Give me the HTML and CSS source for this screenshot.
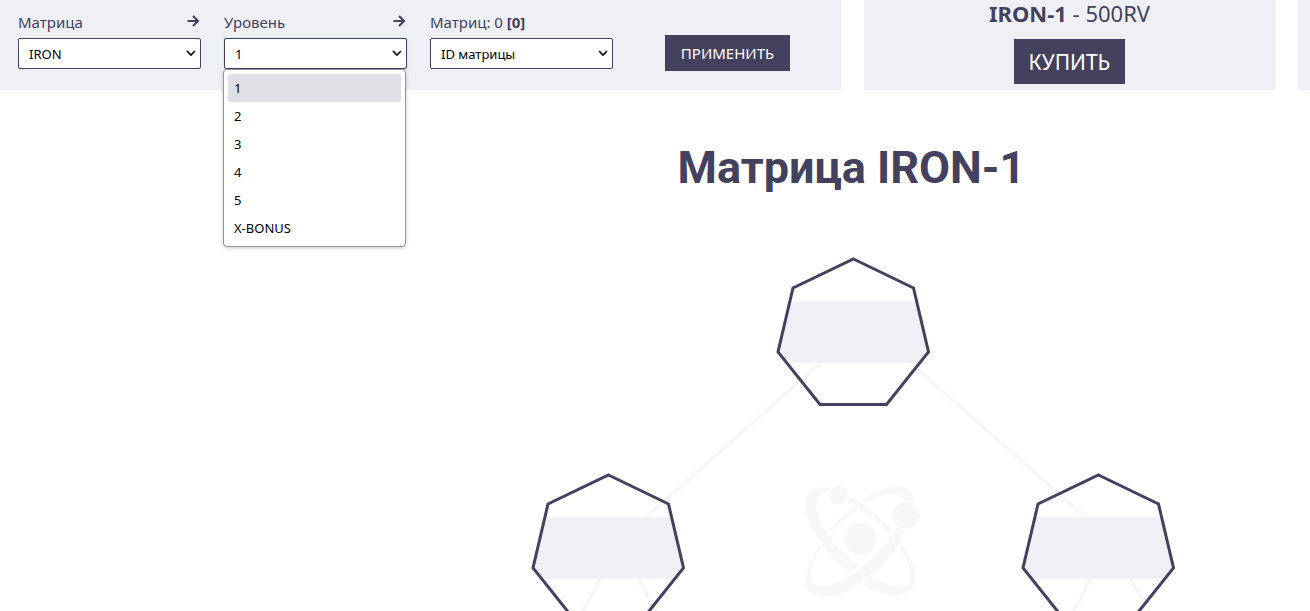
FILE: index.html
```html
<!DOCTYPE html>
<html lang="ru">
<head>
<meta charset="utf-8">
<title>Матрица IRON-1</title>
<link rel="stylesheet" href="styles.css">
</head>
<body>
<header class="topbar">
  <form class="panel filters">
    <div class="field">
      <div class="field-head">
        <label for="matrix">Матрица</label>
        <svg class="arrow" viewBox="0 0 12 12" aria-hidden="true"><path d="M0.500 6H11M6 1L11 6L6 11"/></svg>
      </div>
      <select id="matrix" class="select"><option>IRON</option></select>
    </div>
    <div class="field">
      <div class="field-head">
        <label for="level">Уровень</label>
        <svg class="arrow" viewBox="0 0 12 12" aria-hidden="true"><path d="M0.500 6H11M6 1L11 6L6 11"/></svg>
      </div>
      <select id="level" class="select select-open">
        <option>1</option><option>2</option><option>3</option><option>4</option><option>5</option><option>X-BONUS</option>
      </select>
      <ul class="menu">
        <li class="menu-item menu-item-active">1</li>
        <li class="menu-item">2</li>
        <li class="menu-item">3</li>
        <li class="menu-item">4</li>
        <li class="menu-item">5</li>
        <li class="menu-item">X-BONUS</li>
      </ul>
    </div>
    <div class="field">
      <div class="field-head">
        <label for="matrix-id">Матриц: 0 <b>[0]</b></label>
      </div>
      <select id="matrix-id" class="select"><option>ID матрицы</option></select>
    </div>
    <button type="button" class="btn btn-apply">ПРИМЕНИТЬ</button>
  </form>
  <section class="panel offer">
    <p class="offer-title"><b>IRON-1</b> - 500RV</p>
    <button type="button" class="btn btn-buy">КУПИТЬ</button>
  </section>
  <div class="panel panel-next"></div>
</header>
<main class="content">
  <h1 class="title">Матрица IRON-1</h1>
  <svg class="tree" viewBox="530 250 644 380" role="img" aria-label="Матрица">
    <defs>
      <clipPath id="hepta"><path d="M853.500 259L913.500 288L928.500 352L886.500 404.500H820L778 352L793 288Z"/></clipPath>
      <g id="node">
        <rect class="band" x="770" y="301.500" width="166" height="61" clip-path="url(#hepta)"/>
        <path class="outline" d="M853.500 259L913.500 288L928.500 352L886.500 404.500H820L778 352L793 288Z"/>
      </g>
    </defs>
    <path class="links" d="M853 334L610 549M878 334L1120 548M617 549L565 644M622 549L674 644M1107 549L1058 640M1113 549L1168 644"/>
    <g class="atom" transform="translate(790 475) scale(.3333)">
      <path d="M118 36C40 30 35 95 60 145C85 205 130 255 178 290L206 272C160 240 105 175 85 125C68 80 85 50 120 52Z"/>
      <path d="M178 66C225 88 265 123 302 163L292 173C260 137 220 108 174 82Z"/>
      <path d="M340 210C375 265 385 310 365 340C340 370 275 370 220 325L245 303C290 335 340 345 358 325C370 300 355 260 330 218Z"/>
      <path d="M88 213C55 265 40 310 52 340C75 380 150 370 210 325C270 285 320 230 345 170L320 157C295 205 245 255 200 290C150 325 90 345 68 325C52 300 70 255 94 219Z"/>
      <path d="M122 162C145 133 170 108 195 93L204 104C177 120 150 145 127 171Z"/>
      <path d="M213 77C270 38 330 23 355 45C368 55 372 65 370 80C358 75 350 80 340 78C345 50 295 45 232 83Z"/>
      <circle class="particle" cx="145" cy="60" r="30"/>
      <circle class="particle" cx="348" cy="120" r="43"/>
      <circle cx="211" cy="191" r="48"/>
    </g>
    <use href="#node"/>
    <use href="#node" x="-245" y="216"/>
    <use href="#node" x="245" y="216"/>
  </svg>
</main>
</body>
</html>
```
FILE: styles.css
```css
* { box-sizing: border-box; }

body {
  margin: 0;
  overflow: hidden;
  background: #fff;
  color: #43415e;
  font-family: "Noto Sans", "Open Sans", sans-serif;
  font-size: 15px;
}

.topbar {
  display: grid;
  grid-template-columns: 841fr 411fr 12fr;
  gap: 23px;
}

.panel { background: #eff0f6; }

.filters {
  display: grid;
  grid-template-columns: repeat(4, 1fr);
  gap: 23px;
  padding: 12px 22px 19px 18px;
}

.field {
  position: relative;
  align-self: start;
}

.field-head {
  display: flex;
  justify-content: space-between;
  line-height: 20px;
  margin-bottom: 6px;
}

.arrow {
  width: 12px;
  height: 12px;
  margin: 3px 2px 0 0;
  fill: none;
  stroke: #43415e;
  stroke-width: 2;
}

.select {
  display: block;
  width: 100%;
  height: 31px;
  padding: 0 20px 0 10px;
  border: 1px solid #43415e;
  border-radius: 2px;
  appearance: none;
  background: #fff url("data:image/svg+xml,%3Csvg xmlns='http://www.w3.org/2000/svg' width='10' height='7'%3E%3Cpath d='M1 1l4 4 4-4' fill='none' stroke='%23000' stroke-width='1.600'/%3E%3C/svg%3E") no-repeat right 4px center;
  color: #000;
  font-family: inherit;
  font-size: 13px;
}

.select-open { box-shadow: 0 0 2px #9fd8e0; }

.menu {
  position: absolute;
  top: 100%;
  left: -1px;
  z-index: 2;
  width: 100%;
  margin: 0;
  padding: 4px;
  border: 1px solid #949494;
  border-radius: 4px;
  background: #fff;
  box-shadow: 0 1px 4px rgba(0, 0, 0, .2);
  color: #000;
  font-size: 13px;
  line-height: 28px;
  list-style: none;
}

.menu-item { padding: 0 6px; border-radius: 2px; }
.menu-item-active { background: #e0dfe5; }

.btn {
  border: 0;
  background: #43415e;
  color: #fff;
  font-family: inherit;
}

.btn-apply {
  align-self: end;
  justify-self: center;
  height: 36px;
  padding: 0 16px;
  font-size: 15px;
}

.offer {
  display: flex;
  flex-direction: column;
  align-items: center;
  padding-bottom: 6px;
}

.offer-title {
  margin: 0 0 13px;
  font-size: 22px;
  line-height: 26px;
}

.btn-buy {
  height: 45px;
  padding: 0 15px;
  font-size: 21px;
}

.content {
  display: flex;
  flex-direction: column;
  align-items: center;
  margin-left: 30%;
  padding-top: 48px;
}

.title {
  margin: 0 0 52px;
  font: bold 45px/60px Roboto, sans-serif;
}

.tree {
  width: 100%;
  max-width: 644px;
  overflow: visible;
}

.links { fill: none; stroke: #f7f7f7; stroke-width: 4; }
.band { fill: #eff0f6; }
.outline { fill: none; stroke: #43415e; stroke-width: 3; }
.atom { fill: #f7f7f7; }
.particle { stroke: #fff; stroke-width: 4; }
```
